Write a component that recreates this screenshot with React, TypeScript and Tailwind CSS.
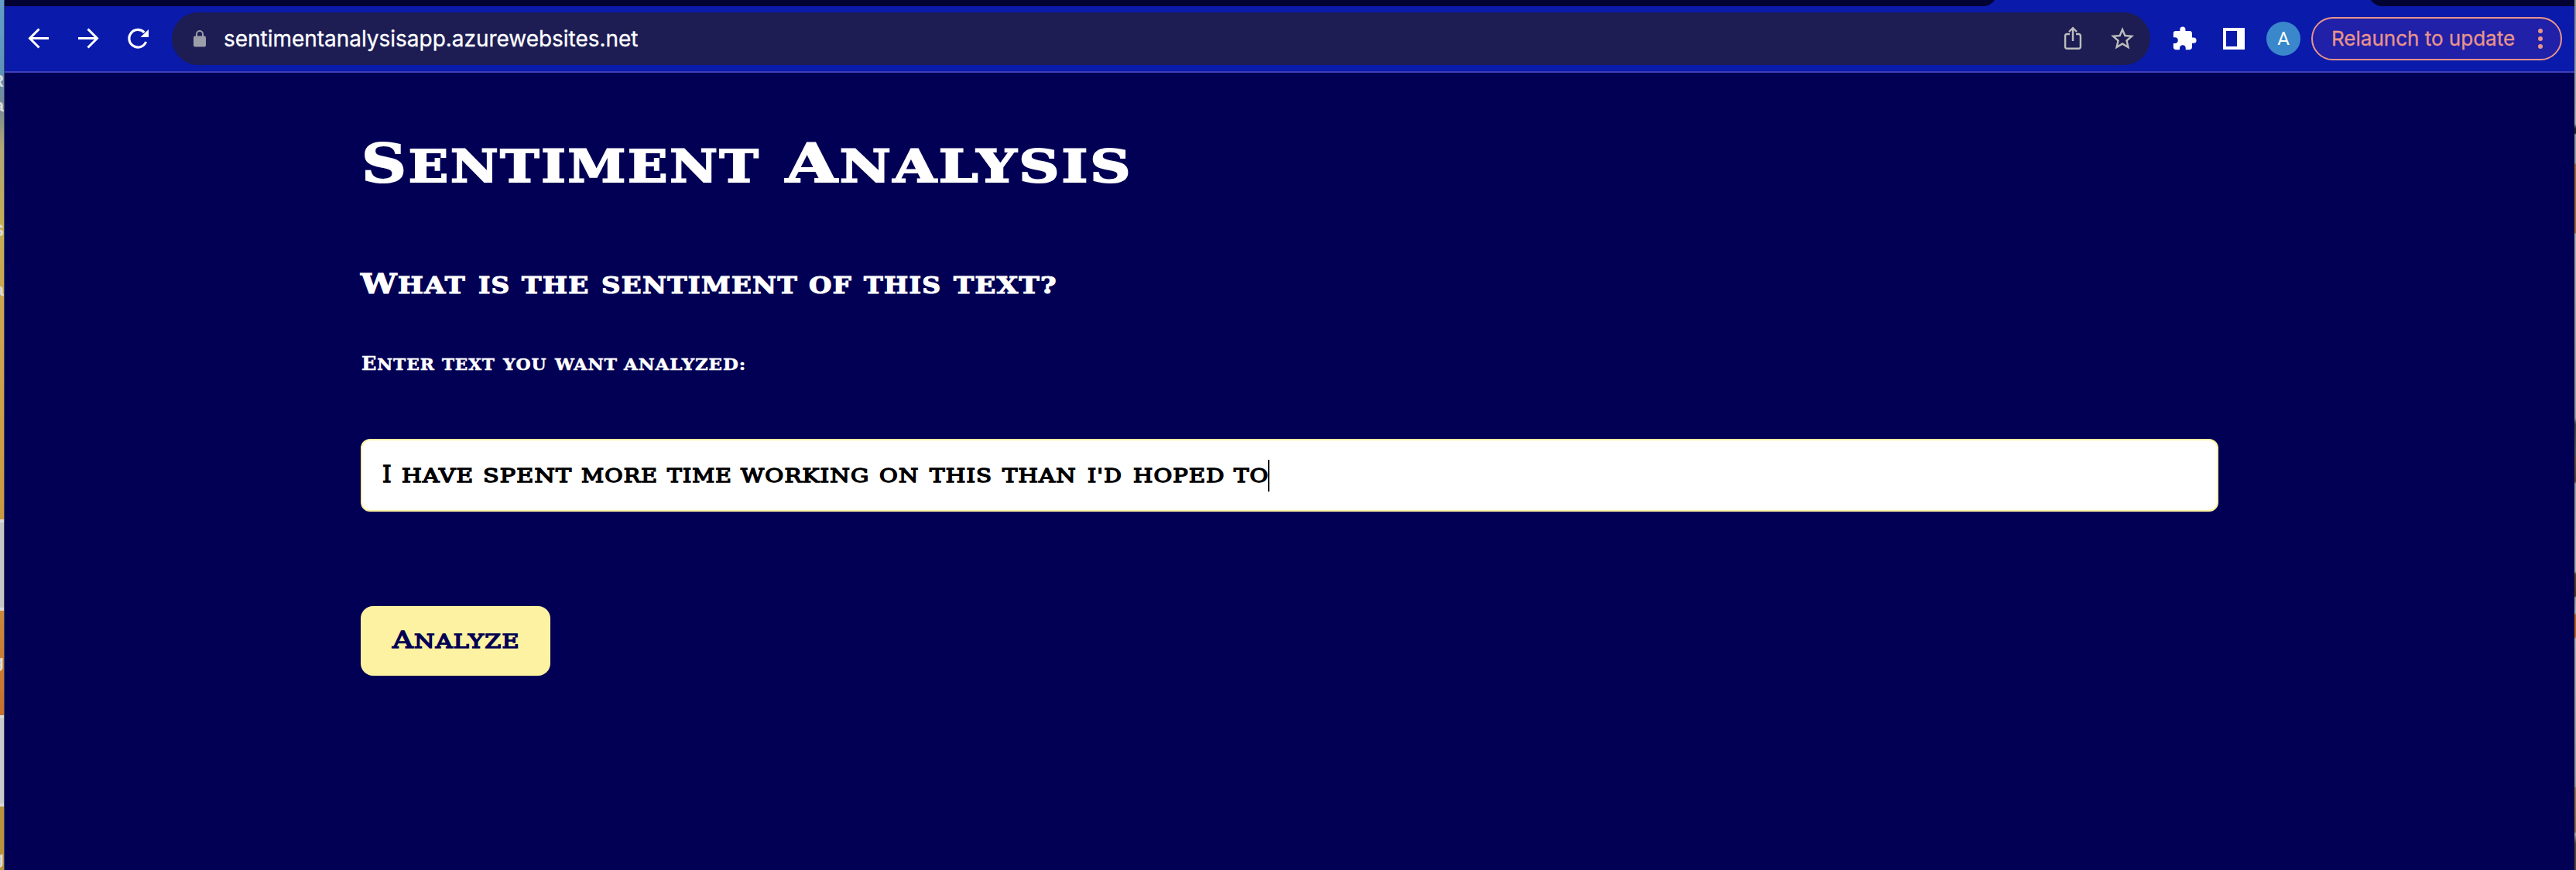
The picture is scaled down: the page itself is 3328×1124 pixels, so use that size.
import { useLayoutEffect, useRef, useState } from "react";
import { MdExtension, MdStarOutline } from "react-icons/md";

type WordData = { text: string; width: number; gap?: number; cap?: boolean };

/** A run of text stretched horizontally so that it fills the given width. */
function Fit({ text, width, className = "" }: { text: string; width: number; className?: string }) {
  const ref = useRef<HTMLSpanElement>(null);
  const [scale, setScale] = useState(1);
  useLayoutEffect(() => {
    const el = ref.current;
    if (!el) return;
    const trailing = parseFloat(getComputedStyle(el).letterSpacing) || 0;
    setScale(width / (el.offsetWidth - trailing));
  }, [width, text]);
  return (
    <span className="inline-block text-left whitespace-nowrap" style={{ width }}>
      <span ref={ref} className={`inline-block origin-left ${className}`} style={{ transform: `scaleX(${scale})` }}>
        {text}
      </span>
    </span>
  );
}

function Line({ words, capClass }: { words: WordData[]; capClass: string }) {
  return (
    <span className="flex items-baseline">
      {words.map((w, i) => (
        <span key={i} className="shrink-0" style={{ marginLeft: w.gap ?? 0 }}>
          <Fit text={w.text} width={w.width} className={`uppercase tracking-[0.04em] ${w.cap ? capClass : ""}`} />
        </span>
      ))}
    </span>
  );
}

const title: WordData[] = [
  { text: "Sentiment", width: 513, cap: true },
  { text: "Analysis", width: 446, gap: 35, cap: true },
];
const question: WordData[] = [
  { text: "What", width: 135, cap: true },
  { text: "is", width: 40, gap: 17 },
  { text: "the", width: 86, gap: 16 },
  { text: "sentiment", width: 253, gap: 17 },
  { text: "of", width: 55, gap: 15 },
  { text: "this", width: 99, gap: 16 },
  { text: "text?", width: 133, gap: 17 },
];
const label: WordData[] = [
  { text: "Enter", width: 94, cap: true },
  { text: "text", width: 68, gap: 10 },
  { text: "you", width: 56, gap: 11 },
  { text: "want", width: 80, gap: 11 },
  { text: "analyzed:", width: 157, gap: 9 },
];
const typed: WordData[] = [
  { text: "I", width: 12, cap: true },
  { text: "have", width: 92, gap: 13 },
  { text: "spent", width: 114, gap: 13 },
  { text: "more", width: 98, gap: 13 },
  { text: "time", width: 83, gap: 13 },
  { text: "working", width: 166, gap: 12 },
  { text: "on", width: 50, gap: 13 },
  { text: "this", width: 80, gap: 15 },
  { text: "than", width: 94, gap: 14 },
  { text: "i'd", width: 44, gap: 16 },
  { text: "hoped", width: 117, gap: 15 },
  { text: "to", width: 44, gap: 13 },
];

function LeftDesktop() {
  const letters = "absolute right-0 font-['Liberation_Sans'] text-[22px] font-bold leading-none text-[#dcdcdc]";
  return (
    <div className="relative flex h-full w-[6px] shrink-0 flex-col overflow-hidden border-r border-[#3a4560]">
      <div className="h-[671px] bg-[linear-gradient(to_bottom,#639fca_0px,#5e93b8_95px,#7b8a92_140px,#b2a678_190px,#c5ad56_290px,#cfa24d_470px,#c99a43_671px)]" />
      <div className="h-[118px] border-y-4 border-[#dadada] bg-[#c6c6c6]" />
      <div className="h-[135px] bg-[linear-gradient(to_bottom,#c98a3a,#c8702f)]" />
      <div className="h-[118px] border-y-4 border-[#dadada] bg-[#cacaca]" />
      <div className="grow bg-[#b8943f]" />
      <span className={`${letters} top-[94px]`}>R</span>
      <span className={`${letters} top-[126px]`}>a</span>
      <span className={`${letters} top-[287px]`}>S</span>
      <span className={`${letters} top-[364px]`}>a</span>
      <span className={`${letters} top-[844px]`}>g</span>
      <span className={`${letters} top-[1098px]`}>g</span>
    </div>
  );
}

function RightDesktop() {
  return (
    <div className="h-full w-[2px] shrink-0 bg-[linear-gradient(to_bottom,#8c8c92_0px,#a8a8a8_160px,#222_166px,#222_172px,#999_174px,#999_211px,#a0692f_212px,#a0692f_301px,#aaa_302px,#999_540px,#444_548px,#555_585px,#6a5038_592px,#5a4434_622px,#999_625px,#aaa_738px,#604428_742px,#50381f_770px,#999_772px,#aaa_792px,#b8641e_794px,#b8641e_823px,#aaa_825px,#999_1016px,#98754f_1018px,#8a6a48_1075px,#aaa_1077px,#5a4433_1090px)]" />
  );
}

function Toolbar() {
  return (
    <header className="flex h-[94px] shrink-0 flex-col border-b-2 border-[#3f3fb9] bg-[#0a1aab]">
      <div className="flex h-[8px] shrink-0 justify-between">
        <div className="h-[8px] w-[2574px] overflow-hidden">
          <div className="-mt-[24px] h-[32px] w-full rounded-br-[18px] bg-[#030333]" />
        </div>
        <div className="h-[8px] w-[266px] overflow-hidden">
          <div className="-mt-[24px] h-[32px] w-full rounded-bl-[18px] bg-[#030333]" />
        </div>
      </div>
      <div className="flex h-[84px] items-center font-['Inter',sans-serif]">
        <svg className="ml-[28px] h-8 w-8 shrink-0" viewBox="0 0 32 32" fill="none" stroke="#fff" strokeWidth="3">
          <path d="M29 15.5H5M16.5 3.5L4.5 15.5L16.5 27.5" />
        </svg>
        <svg className="ml-[32px] h-8 w-8 shrink-0" viewBox="0 0 32 32" fill="none" stroke="#fff" strokeWidth="3">
          <path d="M3 15.5H27M15.5 3.5L27.5 15.5L15.5 27.5" />
        </svg>
        <svg className="ml-[32px] h-8 w-8 shrink-0" viewBox="0 0 32 32">
          <path d="M26.6 20A11.3 11.3 0 1 1 24.4 8" fill="none" stroke="#fff" strokeWidth="3.2" />
          <path d="M30 4V14H19.5Z" fill="#fff" />
        </svg>
        <div className="ml-[28px] flex h-[68px] w-[2556px] shrink-0 items-center rounded-full bg-[#1d1d54]">
          <svg className="ml-[28px] h-[22px] w-4 shrink-0" viewBox="0 0 16 22">
            <path d="M4 9V5a4 4 0 0 1 8 0v4" fill="none" stroke="#9b9da8" strokeWidth="2" />
            <rect x="0" y="7.5" width="16" height="14" rx="2" fill="#9b9da8" />
          </svg>
          <span className="ml-[23px] text-[28px] leading-[40px] text-white [-webkit-text-stroke:0.3px_white]">
            <Fit text="sentimentanalysisapp.azurewebsites.net" width={536} />
          </span>
          <svg className="ml-auto h-8 w-6 shrink-0" viewBox="0 0 24 32" fill="none" stroke="#bdbdbd" strokeWidth="2.4">
            <path d="M8 10H4.5A2.4 2.4 0 0 0 2.1 12.4V26.4A2.4 2.4 0 0 0 4.5 28.8H19.5A2.4 2.4 0 0 0 21.9 26.4V12.4A2.4 2.4 0 0 0 19.5 10H16" />
            <path d="M12 19V3M7 7L12 2.2L17 7" />
          </svg>
          <MdStarOutline className="mr-[18px] ml-[34px] shrink-0 text-[36px] text-[#bdbdbd]" />
        </div>
        <MdExtension className="ml-[27px] shrink-0 text-[34px] text-white" />
        <svg className="ml-[33px] h-7 w-7 shrink-0" viewBox="0 0 28 28">
          <path d="M0 0H28V28H0ZM4 4V24H18V4Z" fill="#fff" fillRule="evenodd" />
        </svg>
        <div className="ml-[28px] flex h-11 w-11 shrink-0 items-center justify-center rounded-full bg-[#3a88cb] font-['Roboto'] text-[24px] leading-none text-white">
          A
        </div>
        <div className="ml-[14px] flex h-14 w-[324px] shrink-0 items-center rounded-full border-2 border-[#e9948b] bg-[#2020a8] text-[26px] text-[#e9948b]">
          <span className="ml-[24px] leading-[40px] [-webkit-text-stroke:0.3px_#e9948b]">
            <Fit text="Relaunch to update" width={237} />
          </span>
          <span className="ml-[30px] flex flex-col gap-1">
            <span className="h-[6px] w-[6px] rounded-full bg-[#e9948b]" />
            <span className="h-[6px] w-[6px] rounded-full bg-[#e9948b]" />
            <span className="h-[6px] w-[6px] rounded-full bg-[#e9948b]" />
          </span>
        </div>
      </div>
    </header>
  );
}

export default function App() {
  return (
    <div className="flex h-[1124px] w-[3328px] overflow-hidden bg-[#020054]">
      <LeftDesktop />
      <div className="flex w-[3320px] shrink-0 flex-col">
        <Toolbar />
        <main className="flex w-[2860px] flex-col items-start pl-[460px] font-['DejaVu_Serif',serif] text-white">
          <h1 className="mt-[77px] ml-px h-[80px] text-[58px] leading-[80px] font-bold [-webkit-text-stroke:2px_white]">
            <Line words={title} capClass="first-letter:text-[69px]" />
          </h1>
          <h2 className="mt-[96px] h-[40px] text-[29.3px] leading-[40px] font-bold [-webkit-text-stroke:1.2px_white]">
            <Line words={question} capClass="first-letter:text-[35px]" />
          </h2>
          <label className="mt-[68px] ml-px h-[30px] text-[20px] leading-[30px] font-bold [-webkit-text-stroke:0.5px_white]">
            <Line words={label} capClass="first-letter:text-[23.3px]" />
          </label>
          <div className="mt-[82px] flex h-[94px] w-[2400px] items-center rounded-[12px] border-2 border-[#fdf2a1] bg-white pl-[26px] text-[23.8px] leading-[36px] text-black [-webkit-text-stroke:1.4px_black]">
            <Line words={typed} capClass="first-letter:text-[29.5px]" />
            <span className="h-[41px] w-[2px] shrink-0 bg-black" />
          </div>
          <button className="mt-[122px] flex h-[90px] w-[245px] items-center justify-center rounded-[16px] bg-[#fdf2a1] text-[24.5px] leading-[36px] text-[#020054] [-webkit-text-stroke:1.5px_#020054]">
            <Line words={[{ text: "Analyze", width: 163, cap: true }]} capClass="first-letter:text-[30px]" />
          </button>
        </main>
      </div>
      <RightDesktop />
    </div>
  );
}
